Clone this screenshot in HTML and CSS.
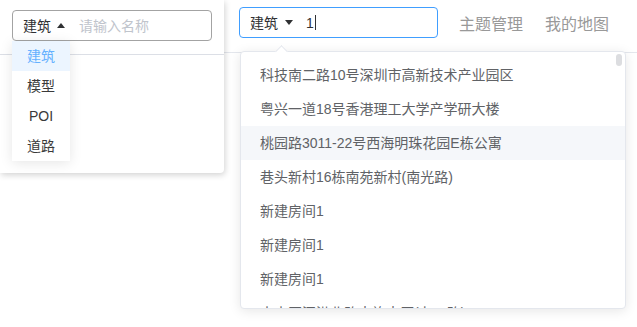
FILE: index.html
```html
<!DOCTYPE html>
<html lang="zh-CN">
<head>
    <meta charset="UTF-8">
    <meta name="viewport" content="width=device-width, initial-scale=1.0">
    <title>地图搜索</title>
    <link rel="stylesheet" href="styles.css">
</head>
<body>
    <div class="header">
        <div class="search-wrap">
            <div class="search is-focus">
                <span class="type">建筑<i class="caret caret-down"></i></span>
                <span class="value">1</span><span class="cursor"></span>
            </div>

            <!-- 搜索建议 -->
            <div class="suggest">
                <div class="arrow"></div>
                <ul class="suggest-list">
                    <li>科技南二路10号深圳市高新技术产业园区</li>
                    <li>粤兴一道18号香港理工大学产学研大楼</li>
                    <li class="hover">桃园路3011-22号西海明珠花园E栋公寓</li>
                    <li>巷头新村16栋南苑新村(南光路)</li>
                    <li>新建房间1</li>
                    <li>新建房间1</li>
                    <li>新建房间1</li>
                    <li>南山区深港北路大族大厦(办工路)</li>
                </ul>
                <div class="scroll-thumb"></div>
            </div>
        </div>

        <div class="nav">
            <a href="#">主题管理</a>
            <a href="#">我的地图</a>
            <span class="nav-dot"></span>
        </div>
    </div>

    <div class="side-panel">
        <div class="panel-top">
            <div class="name-input">
                <span class="type">建筑<i class="caret caret-up"></i></span>
                <span class="placeholder">请输入名称</span>
            </div>
        </div>

        <ul class="type-menu">
            <li class="active">建筑</li>
            <li>模型</li>
            <li>POI</li>
            <li>道路</li>
        </ul>
    </div>
</body>
</html>
```

FILE: styles.css
```css
body {
    margin: 0;
    padding: 0;
    background-color: #ffffff;
    font-family: "Liberation Sans", "Noto Sans CJK SC", sans-serif;
    font-size: 14px;
    color: #303133;
    overflow: hidden;
    height: 100vh;
}

ul {
    list-style: none;
    margin: 0;
    padding: 0;
}

.header {
    height: 52px;
    border-bottom: 1px solid #e4e7ed;
    display: flex;
    align-items: flex-start;
    padding-left: 239px;
}

.search-wrap {
    position: relative;
    flex-shrink: 0;
    margin-top: 7px;
}

.search {
    width: 199px;
    height: 31px;
    box-sizing: border-box;
    border: 1px solid #409eff;
    border-radius: 4px;
    display: flex;
    align-items: center;
    padding-left: 10px;
}

.type {
    display: flex;
    align-items: center;
    color: #303133;
    line-height: 1;
}

.caret {
    display: inline-block;
    width: 0;
    height: 0;
    margin-left: 7px;
    border-left: 4px solid transparent;
    border-right: 4px solid transparent;
}

.caret-down {
    border-top: 5px solid #303133;
}

.caret-up {
    border-bottom: 5px solid #303133;
    margin-left: 6px;
}

.value {
    margin-left: 13px;
    line-height: 1;
}

.cursor {
    display: inline-block;
    width: 1px;
    height: 15px;
    background-color: #303133;
    margin-left: 1px;
}

.suggest {
    position: absolute;
    top: 44px;
    left: 1px;
    width: 386px;
    height: 258px;
    box-sizing: border-box;
    background-color: #ffffff;
    border: 1px solid #e4e7ed;
    border-radius: 4px;
    box-shadow: 0 2px 12px 0 rgba(0, 0, 0, 0.1);
    z-index: 2;
}

.arrow {
    position: absolute;
    top: -5px;
    left: 36px;
    width: 8px;
    height: 8px;
    background-color: #ffffff;
    border-top: 1px solid #e4e7ed;
    border-left: 1px solid #e4e7ed;
    transform: rotate(45deg);
}

.suggest-list {
    height: 100%;
    overflow: hidden;
    padding-top: 6px;
    box-sizing: border-box;
}

.suggest-list li {
    height: 34px;
    line-height: 34px;
    padding: 0 19px;
    color: #606266;
    white-space: nowrap;
}

.suggest-list li.hover {
    background-color: #f5f7fa;
}

.scroll-thumb {
    position: absolute;
    top: 2px;
    right: 3px;
    width: 6px;
    height: 12px;
    border-radius: 3px;
    background-color: #dcdde0;
}

.nav {
    display: flex;
    align-items: center;
    flex-shrink: 0;
    height: 31px;
    margin-top: 7px;
    margin-left: 21px;
    white-space: nowrap;
}

.nav a {
    color: #999999;
    font-size: 16px;
    text-decoration: none;
    margin-right: 22px;
}

.nav-dot {
    width: 6px;
    height: 2px;
    margin-left: 11px;
    margin-top: -6px;
    background-color: #f5a623;
    border-radius: 1px;
}

.side-panel {
    position: absolute;
    top: 0;
    left: 0;
    width: 224px;
    height: 173px;
    background-color: #ffffff;
    border-radius: 0 0 4px 0;
    box-shadow: 1px 2px 6px rgba(0, 0, 0, 0.18);
    z-index: 3;
}

.panel-top {
    height: 55px;
    border-bottom: 1px solid #dcdfe6;
    padding: 10px 12px 0;
    box-sizing: border-box;
}

.name-input {
    height: 31px;
    box-sizing: border-box;
    border: 1px solid #a3a3a3;
    border-radius: 4px;
    display: flex;
    align-items: center;
    padding-left: 10px;
}

.placeholder {
    margin-left: 14px;
    color: #c0c4cc;
    line-height: 1;
}

.type-menu {
    position: absolute;
    top: 41px;
    left: 12px;
    width: 58px;
    background-color: #ffffff;
    box-shadow: 0 2px 12px 0 rgba(0, 0, 0, 0.1);
}

.type-menu li {
    height: 30px;
    line-height: 30px;
    text-align: center;
    color: #3a3a3a;
}

.type-menu li.active {
    background-color: #ecf5ff;
    color: #66b1ff;
}
```
